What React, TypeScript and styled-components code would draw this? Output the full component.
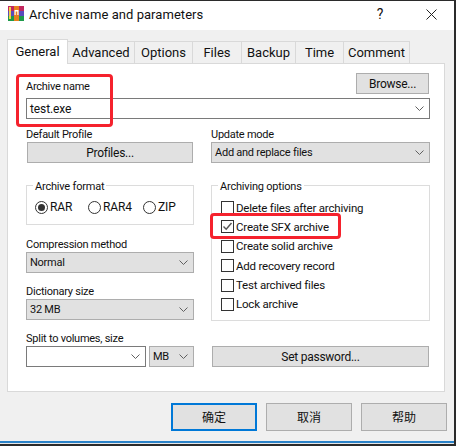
import styled, { createGlobalStyle } from 'styled-components'

const GlobalStyle = createGlobalStyle`
  html, body {
    margin: 0;
    padding: 0;
    background: #f0f0f0;
  }
  * {
    box-sizing: border-box;
  }
`

const Window = styled.div`
  position: relative;
  width: 456px;
  height: 446px;
  display: flex;
  flex-direction: column;
  overflow: hidden;
  background: #f0f0f0;
  border-top: 1px solid #2b2b2b;
  border-right: 2px solid #2b2b2b;
  font-family: Roboto, 'Noto Sans CJK SC', sans-serif;
  font-size: 12px;
  color: #111;
`

const TitleBar = styled.div`
  height: 29px;
  flex: none;
  display: flex;
  align-items: center;
  background: #fff;
  padding: 0 0 3px 8px;
  gap: 5px;
`

const Title = styled.div`
  flex: 1;
  font-size: 13px;
  letter-spacing: 0.05px;
`

const TitleButton = styled.div`
  width: 46px;
  display: flex;
  justify-content: center;
  font-size: 14px;
`

const Tabs = styled.div`
  display: flex;
  height: 33px;
  padding: 9px 0 0 7px;
  flex: none;
`

const Tab = styled.div<{ $active?: boolean; $w: number }>`
  width: ${({ $w }) => $w}px;
  height: ${({ $active }) => ($active ? 25 : 23)}px;
  margin-top: ${({ $active }) => ($active ? 0 : 2)}px;
  padding-bottom: ${({ $active }) => ($active ? 2 : 0)}px;
  background: ${({ $active }) => ($active ? '#fff' : '#f0f0f0')};
  border: 1px solid #d9d9d9;
  border-bottom: ${({ $active }) => ($active ? 'none' : '1px solid #d9d9d9')};
  margin-right: -1px;
  position: relative;
  z-index: ${({ $active }) => ($active ? 1 : 0)};
  display: flex;
  align-items: center;
  justify-content: center;
  font-size: 13px;
`

const Panel = styled.div`
  margin-left: 7px;
  width: 438px;
  height: 329px;
  flex: none;
  background: #fff;
  border: 1px solid #d9d9d9;
  padding: 9px 14px 0 18px;
  display: flex;
  flex-direction: column;
`

const NameHead = styled.div`
  display: flex;
  justify-content: space-between;
  align-items: flex-end;
  padding-right: 1px;
  margin-bottom: 4px;
`

const Label = styled.div<{ $gap?: number }>`
  height: 18px;
  line-height: 22px;
  margin-top: ${({ $gap }) => $gap ?? 0}px;
  font-size: 11px;
  letter-spacing: -0.25px;
`

const Btn = styled.div<{ $w?: number }>`
  width: ${({ $w }) => ($w ? `${$w}px` : 'auto')};
  height: 21px;
  background: #e1e1e1;
  border: 1px solid #adadad;
  display: flex;
  align-items: center;
  justify-content: center;
  letter-spacing: -0.25px;
`

const InsetBtn = styled(Btn)<{ $top?: number }>`
  margin: ${({ $top }) => $top ?? 0}px 1px 0;
`

const Combo = styled.div<{ $edit?: boolean; $w?: number }>`
  width: ${({ $w }) => ($w ? `${$w}px` : '100%')};
  height: 21px;
  flex: none;
  display: flex;
  align-items: center;
  justify-content: space-between;
  padding: 0 5px 0 3px;
  background: ${({ $edit }) => ($edit ? '#fff' : '#e1e1e1')};
  border: 1px solid ${({ $edit }) => ($edit ? '#7a7a7a' : '#adadad')};
  font-size: ${({ $edit }) => ($edit ? 12 : 11)}px;
  letter-spacing: ${({ $edit }) => ($edit ? -0.1 : -0.25)}px;
`

const Columns = styled.div`
  display: grid;
  grid-template-columns: 168px 219px;
  column-gap: 17px;
  margin-top: 5px;
`

const Column = styled.div`
  display: flex;
  flex-direction: column;
`

const Group = styled.fieldset<{ $h: number }>`
  margin: 14px 0 0;
  padding: 0;
  height: ${({ $h }) => $h}px;
  border: 1px solid #dcdcdc;
  min-width: 0;
`

const Legend = styled.legend`
  margin-left: 6px;
  padding: 0 2px;
  height: 16px;
  line-height: 20px;
  font-size: 11px;
  letter-spacing: -0.2px;
`

const RadioRow = styled.div`
  display: flex;
  padding: 7px 0 0 8px;
`

const RadioItem = styled.div<{ $w: number }>`
  width: ${({ $w }) => $w}px;
  display: flex;
  align-items: center;
  gap: 2px;
  letter-spacing: -0.1px;
`

const Radio = styled.span<{ $on?: boolean }>`
  width: 13px;
  height: 13px;
  flex: none;
  border-radius: 50%;
  border: 1px solid #333;
  display: flex;
  align-items: center;
  justify-content: center;
  &::after {
    content: '';
    width: 7px;
    height: 7px;
    border-radius: 50%;
    background: ${({ $on }) => ($on ? '#333' : 'transparent')};
  }
`

const CheckList = styled.div`
  display: flex;
  flex-direction: column;
  padding: 6px 0 0 9px;
  gap: 2.4px;
`

const CheckRow = styled.div`
  display: flex;
  align-items: center;
  gap: 2px;
  height: 17px;
  font-size: 11.5px;
  letter-spacing: -0.2px;
`

const CheckBox = styled.span`
  width: 13px;
  height: 13px;
  flex: none;
  border: 1px solid #333;
  display: flex;
  align-items: center;
  justify-content: center;
`

const SplitRow = styled.div`
  display: flex;
  gap: 3px;
`

const Footer = styled.div`
  display: flex;
  justify-content: flex-end;
  gap: 9px;
  padding: 11px 7px 0 0;
  flex: none;
`

const DialogBtn = styled.div<{ $primary?: boolean }>`
  width: 86px;
  height: 28px;
  padding-bottom: 2px;
  background: #e1e1e1;
  border: ${({ $primary }) => ($primary ? '2px solid #0078d7' : '1px solid #adadad')};
  display: flex;
  align-items: center;
  justify-content: center;
`

const BottomEdge = styled.div`
  margin: auto -2px 0 0;
  height: 5px;
  background: linear-gradient(#2a82c8 0 2px, #e6e6e6 2px 3px, #2b2b2b 3px);
`

const Callout = styled.div<{ $l: number; $t: number; $w: number; $h: number }>`
  position: absolute;
  left: ${({ $l }) => $l}px;
  top: ${({ $t }) => $t}px;
  width: ${({ $w }) => $w}px;
  height: ${({ $h }) => $h}px;
  border: 3px solid #f5222d;
  border-radius: 4px;
`

const Chevron = () => (
  <svg width="9" height="5" viewBox="0 0 9 5" fill="none" stroke="#606060" strokeWidth="1">
    <path d="M0.5 0.5 L4.5 4.5 L8.5 0.5" />
  </svg>
)

const AppIcon = () => (
  <svg width="16" height="16" viewBox="0 0 16 16">
    <rect x="0" y="0" width="16" height="5" fill="#c2275f" />
    <rect x="0" y="5" width="16" height="5" fill="#5b4bbd" />
    <rect x="0" y="10" width="16" height="5" fill="#1f9a4b" />
    <rect x="1" y="1" width="2" height="12" fill="#f0d24a" />
    <rect x="6" y="0" width="5" height="15" fill="#e8801f" />
    <path d="M6.5 9 V4 H10.5 V9 H9.3 V5.5 H7.7 V9 Z" fill="#fff" />
  </svg>
)

const tabs = [
  { label: 'General', w: 61, active: true },
  { label: 'Advanced', w: 68 },
  { label: 'Options', w: 59 },
  { label: 'Files', w: 50 },
  { label: 'Backup', w: 55 },
  { label: 'Time', w: 49 },
  { label: 'Comment', w: 67 },
]

const formats = [
  { label: 'RAR', w: 53, on: true },
  { label: 'RAR4', w: 55 },
  { label: 'ZIP', w: 40 },
]

const options = [
  { label: 'Delete files after archiving' },
  { label: 'Create SFX archive', checked: true },
  { label: 'Create solid archive' },
  { label: 'Add recovery record' },
  { label: 'Test archived files' },
  { label: 'Lock archive' },
]

export default function App() {
  return (
    <Window>
      <GlobalStyle />
      <TitleBar>
        <AppIcon />
        <Title>Archive name and parameters</Title>
        <TitleButton>?</TitleButton>
        <TitleButton>
          <svg width="11" height="11" viewBox="0 0 11 11" stroke="#222" strokeWidth="1">
            <path d="M0.5 0.5 L10.5 10.5 M10.5 0.5 L0.5 10.5" />
          </svg>
        </TitleButton>
      </TitleBar>
      <Tabs>
        {tabs.map((t) => (
          <Tab key={t.label} $w={t.w} $active={t.active}>
            {t.label}
          </Tab>
        ))}
      </Tabs>
      <Panel>
        <NameHead>
          <Label>Archive name</Label>
          <Btn $w={73}>Browse...</Btn>
        </NameHead>
        <Combo $edit>
          test.exe
          <Chevron />
        </Combo>
        <Columns>
          <Column>
            <Label>Default Profile</Label>
            <InsetBtn>Profiles...</InsetBtn>
            <Group $h={48}>
              <Legend>Archive format</Legend>
              <RadioRow>
                {formats.map((f) => (
                  <RadioItem key={f.label} $w={f.w}>
                    <Radio $on={f.on} />
                    {f.label}
                  </RadioItem>
                ))}
              </RadioRow>
            </Group>
            <Label $gap={9}>Compression method</Label>
            <Combo>
              Normal
              <Chevron />
            </Combo>
            <Label $gap={8}>Dictionary size</Label>
            <Combo>
              32 MB
              <Chevron />
            </Combo>
            <Label $gap={8}>Split to volumes, size</Label>
            <SplitRow>
              <Combo $edit $w={120}>
                <span />
                <Chevron />
              </Combo>
              <Combo $w={45}>
                MB
                <Chevron />
              </Combo>
            </SplitRow>
          </Column>
          <Column>
            <Label>Update mode</Label>
            <Combo>
              Add and replace files
              <Chevron />
            </Combo>
            <Group $h={144}>
              <Legend>Archiving options</Legend>
              <CheckList>
                {options.map((o) => (
                  <CheckRow key={o.label}>
                    <CheckBox>
                      {o.checked && (
                        <svg width="11" height="11" viewBox="0 0 11 11" fill="none" stroke="#555" strokeWidth="1.4">
                          <path d="M1.5 5.5 L4.2 8.2 L9.5 2" />
                        </svg>
                      )}
                    </CheckBox>
                    {o.label}
                  </CheckRow>
                ))}
              </CheckList>
            </Group>
            <InsetBtn $top={25}>Set password...</InsetBtn>
          </Column>
        </Columns>
      </Panel>
      <Footer>
        <DialogBtn $primary>确定</DialogBtn>
        <DialogBtn>取消</DialogBtn>
        <DialogBtn>帮助</DialogBtn>
      </Footer>
      <BottomEdge />
      <Callout $l={16} $t={73} $w={97} $h={53} />
      <Callout $l={210} $t={212} $w={131} $h={26} />
    </Window>
  )
}
